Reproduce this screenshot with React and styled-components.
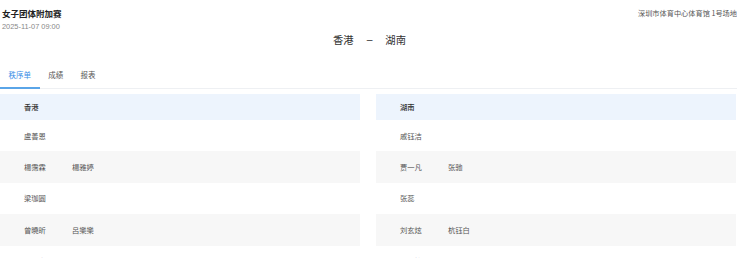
import React from "react";
import styled, { createGlobalStyle } from "styled-components";

const Global = createGlobalStyle`
  html, body { margin: 0; padding: 0; background: #fff; }
  body { font-family: "Noto Sans CJK SC", "Noto Sans", sans-serif; color: #333; overflow: hidden; }
`;

const Page = styled.div`
  width: 737px;
  box-sizing: border-box;
`;

const TopBar = styled.div`
  display: flex;
  justify-content: space-between;
  align-items: flex-start;
  padding: 7px 0 0 2px;
`;

const Title = styled.div`
  font-size: 8.5px;
  line-height: 12px;
  font-weight: 700;
  color: #222;
`;

const DateText = styled.div`
  margin-top: 3px;
  font-size: 7.4px;
  line-height: 10px;
  color: #888;
  font-family: "Liberation Sans", "Noto Sans CJK SC", sans-serif;
`;

const Venue = styled.div`
  font-size: 7.2px;
  line-height: 12px;
  color: #555;
`;

const Match = styled.div`
  margin-top: 1px;
  display: flex;
  justify-content: center;
  gap: 13px;
  font-size: 10.3px;
  line-height: 14px;
  color: #333;
  padding-left: 2px;
`;

const Dash = styled.span`
  font-family: "Liberation Sans", sans-serif;
`;

const Tabs = styled.div`
  margin-top: 15px;
  display: flex;
  border-bottom: 1px solid #eef0f3;
`;

const Tab = styled.div`
  position: relative;
  padding: 6px 8.6px 7px;
  font-size: 7.5px;
  line-height: 13px;
  color: ${(p) => (p.$active ? "#3a8ee6" : "#555")};
  &::after {
    content: "";
    display: ${(p) => (p.$active ? "block" : "none")};
    position: absolute;
    left: 0;
    right: 0;
    bottom: -1px;
    height: 2px;
    background: #5aa5e8;
  }
`;

const Columns = styled.div`
  margin-top: 5px;
  display: grid;
  grid-template-columns: 360px 360px;
  column-gap: 16px;
`;

const Column = styled.div`
  display: flex;
  flex-direction: column;
`;

const Row = styled.div`
  display: flex;
  align-items: center;
  height: ${(p) => (p.$variant === "head" ? "26px" : "31.4px")};
  padding-left: 24px;
  background: ${(p) =>
    p.$variant === "head" ? "#edf4fd" : p.$variant === "alt" ? "#f7f7f7" : "#fff"};
  font-size: 7.3px;
  color: ${(p) => (p.$variant === "head" ? "#333" : "#555")};
  font-weight: ${(p) => (p.$variant === "head" ? 500 : 400)};
`;

const Name = styled.span`
  width: 48px;
`;

const left = [
  ["盧善恩"],
  ["楊霈霖", "楊雅婷"],
  ["梁珈圓"],
  ["曾曉昕", "呂樂樂"],
  ["張雁宜"],
];
const right = [
  ["戚钰洁"],
  ["贾一凡", "张驰"],
  ["张蕊"],
  ["刘玄炫", "杭钰白"],
  ["周昕怡"],
];

function Team({ name, rows }) {
  return (
    <Column>
      <Row $variant="head">{name}</Row>
      {rows.map((r, i) => (
        <Row key={i} $variant={i % 2 === 1 ? "alt" : "plain"}>
          {r.map((n) => (
            <Name key={n}>{n}</Name>
          ))}
        </Row>
      ))}
    </Column>
  );
}

export default function App() {
  return (
    <Page>
      <Global />
      <TopBar>
        <div>
          <Title>女子团体附加赛</Title>
          <DateText>2025-11-07 09:00</DateText>
        </div>
        <Venue>深圳市体育中心体育馆 1号场地</Venue>
      </TopBar>
      <Match>
        <span>香港</span>
        <Dash>–</Dash>
        <span>湖南</span>
      </Match>
      <Tabs>
        <Tab $active>秩序单</Tab>
        <Tab>成绩</Tab>
        <Tab>报表</Tab>
      </Tabs>
      <Columns>
        <Team name="香港" rows={left} />
        <Team name="湖南" rows={right} />
      </Columns>
    </Page>
  );
}
